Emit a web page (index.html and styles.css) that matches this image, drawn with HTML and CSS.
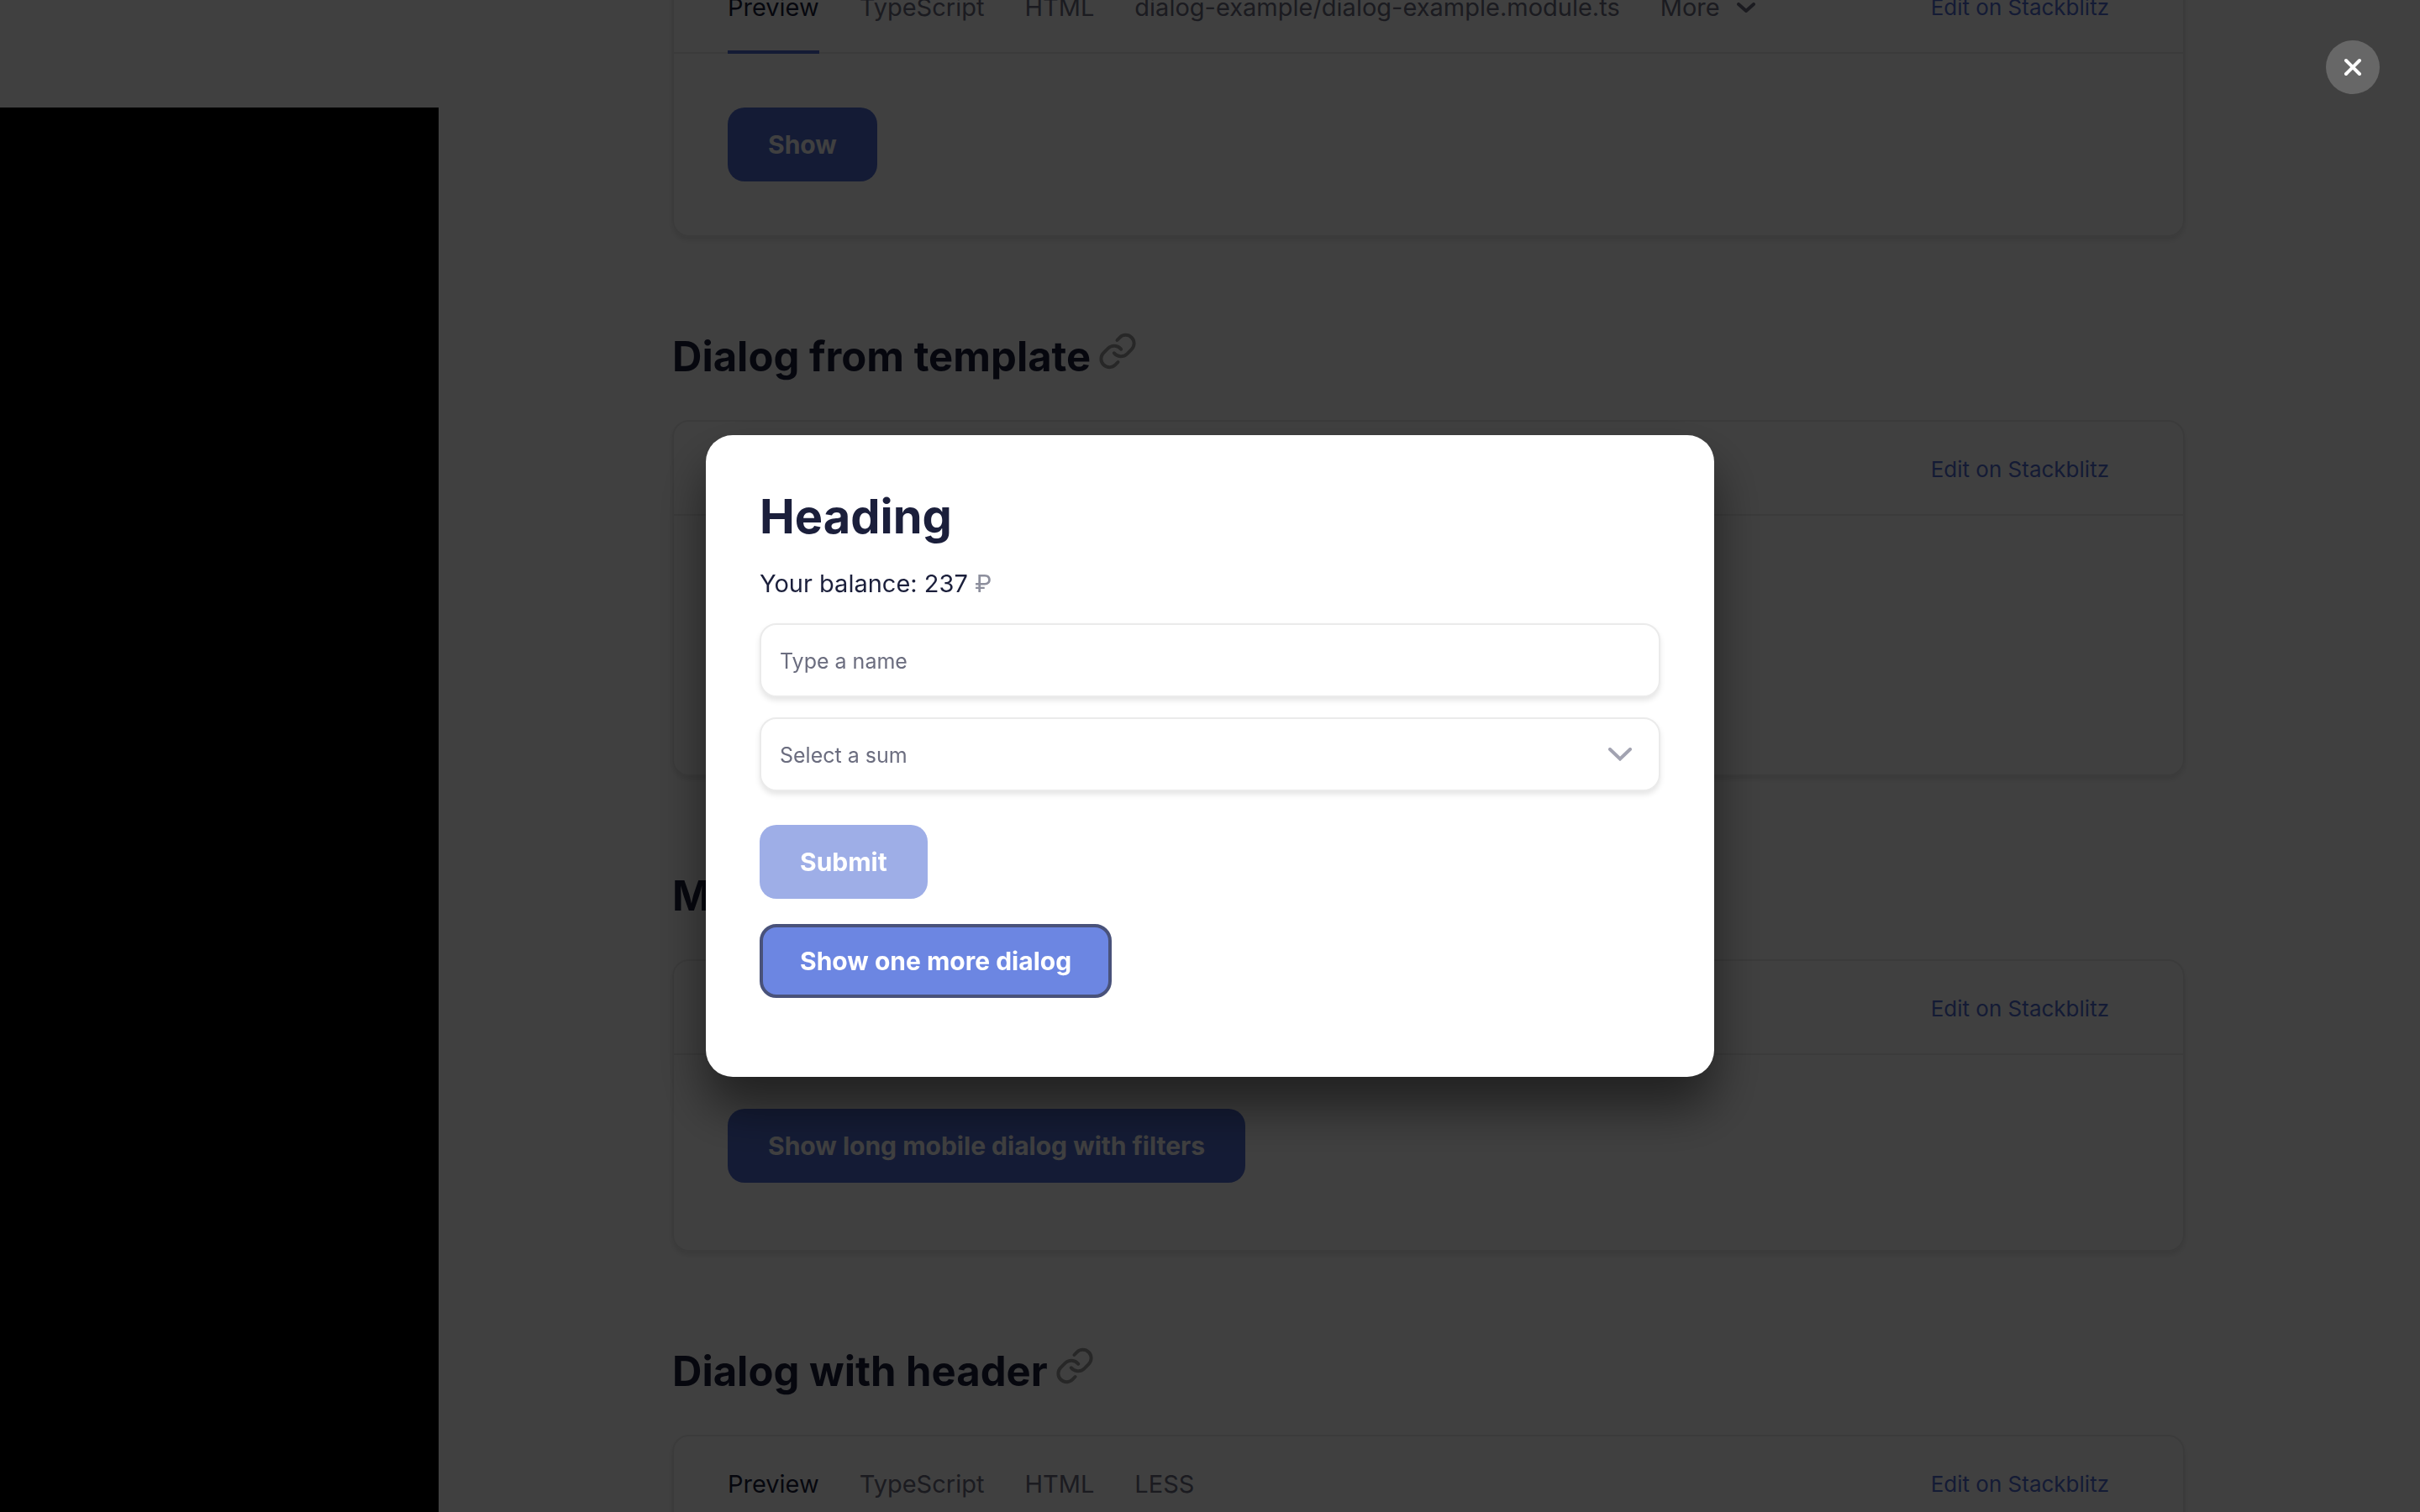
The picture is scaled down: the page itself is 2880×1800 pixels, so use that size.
FILE: index.html
```
<!DOCTYPE html>
<html lang="en">
<head>
  <meta charset="utf-8">
  <title>Dialog</title>
  <link rel="stylesheet" href="styles.css">
</head>
<body>
  <svg class="sprite" aria-hidden="true">
    <symbol id="icon-link" viewBox="0 0 44 44">
      <path d="M21.5 9 24.5 5.8A10 10 0 0 1 38.7 19.9L33.3 25.3A10.5 10.5 0 0 1 17.8 24.3M22.5 35 19.5 38.2A10 10 0 0 1 5.3 24.1L10.7 18.7A10.5 10.5 0 0 1 26.2 19.7" fill="none" stroke="currentColor" stroke-width="4" stroke-linecap="round"/>
    </symbol>
  </svg>

  <div class="page">
    <aside class="sidebar"></aside>
    <main class="content">
      <section class="card">
        <header class="card-header">
          <nav class="tabs">
            <button class="tab tab-active" type="button">Preview</button>
            <button class="tab" type="button">TypeScript</button>
            <button class="tab" type="button">HTML</button>
            <button class="tab" type="button">dialog-example/dialog-example.module.ts</button>
            <button class="tab" type="button">More
              <svg class="tab-chevron" viewBox="0 0 22 12" aria-hidden="true"><path d="M2 2l9 8 9-8" fill="none" stroke="currentColor" stroke-width="4" stroke-linecap="round" stroke-linejoin="round"/></svg>
            </button>
          </nav>
          <a class="link" href="#">Edit on Stackblitz</a>
        </header>
        <div class="card-body"><button class="button" type="button">Show</button></div>
      </section>

      <h2 class="title">Dialog from template <a class="anchor" href="#template" aria-label="Link to section"><svg><use href="#icon-link"/></svg></a></h2>
      <section class="card" id="template">
        <header class="card-header">
          <a class="link" href="#">Edit on Stackblitz</a>
        </header>
        <div class="card-body card-body-tall"></div>
      </section>

      <h2 class="title">Mobile</h2>
      <section class="card" id="mobile">
        <header class="card-header">
          <a class="link" href="#">Edit on Stackblitz</a>
        </header>
        <div class="card-body card-body-spaced"><button class="button" type="button">Show long mobile dialog with filters</button></div>
      </section>

      <h2 class="title">Dialog with header <a class="anchor" href="#header" aria-label="Link to section"><svg><use href="#icon-link"/></svg></a></h2>
      <section class="card" id="header">
        <header class="card-header">
          <nav class="tabs">
            <button class="tab tab-active" type="button">Preview</button>
            <button class="tab" type="button">TypeScript</button>
            <button class="tab" type="button">HTML</button>
            <button class="tab" type="button">LESS</button>
          </nav>
          <a class="link" href="#">Edit on Stackblitz</a>
        </header>
      </section>
    </main>
  </div>

  <div class="overlay">
    <form class="dialog" role="dialog" aria-modal="true" aria-labelledby="dialog-heading">
      <h1 class="dialog-heading" id="dialog-heading">Heading</h1>
      <p class="balance">Your balance: 237 <span class="currency">₽</span></p>
      <input class="field" type="text" placeholder="Type a name" aria-label="Type a name">
      <div class="select">
        <select class="field" aria-label="Select a sum"><option>Select a sum</option></select>
        <svg class="select-chevron" viewBox="0 0 28 16" aria-hidden="true"><path d="M2 2l12 11.5L26 2" fill="none" stroke="currentColor" stroke-width="4" stroke-linecap="round"/></svg>
      </div>
      <button class="button button-submit" type="submit" disabled>Submit</button>
      <button class="button button-focused" type="button">Show one more dialog</button>
    </form>
    <button class="close" type="button" aria-label="Close">
      <svg viewBox="0 0 22 22" aria-hidden="true"><path d="M3 3l16 16M19 3 3 19" fill="none" stroke="currentColor" stroke-width="4" stroke-linecap="round"/></svg>
    </button>
  </div>
</body>
</html>
```
FILE: styles.css
```
:root {
  --text: #1b1f3b;
  --text-muted: #6b6d7f;
  --primary: #526ed3;
  --primary-hover: #6c86e2;
  --line: #ebebeb;
  --card-shadow: 0 4px 6px rgba(0, 0, 0, 0.1);
}

*, *::before, *::after {
  box-sizing: border-box;
}

body {
  margin: 0;
  height: 100vh;
  overflow: hidden;
  background: #fff;
  color: var(--text);
  font: 400 29px/40px Inter, "Open Sans", sans-serif;
}

button, input, select {
  font: inherit;
  color: inherit;
}

.sprite {
  display: none;
}

.page {
  display: grid;
  grid-template-columns: 522px 1fr;
  height: 100vh;
  overflow: hidden;
}

.sidebar {
  margin-top: 128px;
  background: #000;
}

/* The page stays scrolled while the dialog is open */
.content {
  margin-top: -50px;
  padding: 0 280px 0 278px;
}

.card {
  border: 2px solid var(--line);
  border-radius: 20px;
  box-shadow: var(--card-shadow);
}

.card-header {
  display: flex;
  justify-content: space-between;
  align-items: center;
  height: 112px;
  padding: 2px 88px 0 64px;
  border-bottom: 2px solid var(--line);
}

.tabs {
  display: flex;
  align-self: stretch;
  gap: 48px;
}

.tab {
  display: flex;
  align-items: center;
  gap: 20px;
  margin-bottom: -2px;
  padding: 4px 0 0;
  border: 0;
  border-bottom: 4px solid transparent;
  background: none;
  color: var(--text-muted);
  white-space: nowrap;
}

.tab-active {
  border-bottom-color: var(--primary);
  color: var(--text);
}

.tab-chevron {
  width: 22px;
  height: 12px;
}

.link {
  margin-left: auto;
  padding-top: 2px;
  color: var(--primary);
  font-size: 26px;
  text-decoration: none;
}

.card-body {
  padding: 64px;
}

.card-body-tall {
  min-height: 308px;
}

.card-body-spaced {
  padding-bottom: 80px;
}

.title {
  display: flex;
  gap: 10px;
  margin: 111px 0 43px;
  font-size: 49px;
  line-height: 64px;
  font-weight: 700;
}

.anchor {
  color: #9c9c9c;
}

.anchor svg {
  display: block;
  width: 44px;
  height: 44px;
  margin-top: 3px;
}

.button {
  display: block;
  height: 88px;
  padding: 0 48px;
  border: 0;
  border-radius: 20px;
  background: var(--primary);
  color: #fff;
  font-size: 30px;
  font-weight: 700;
}

.overlay {
  position: fixed;
  inset: 0;
  display: flex;
  align-items: center;
  justify-content: center;
  background: rgba(0, 0, 0, 0.75);
}

.dialog {
  width: 1200px;
  padding: 65px 64px 94px;
  border-radius: 32px;
  background: #fff;
  box-shadow: 0 36px 60px rgba(0, 0, 0, 0.5);
}

.dialog-heading {
  margin: 0 0 28px;
  font-size: 56px;
  line-height: 64px;
  font-weight: 700;
}

.balance {
  margin: 0 0 27px;
}

.currency {
  color: #8d8f9d;
}

.field {
  display: block;
  width: 100%;
  height: 88px;
  padding: 2px 22px 0;
  border: 2px solid var(--line);
  border-radius: 20px;
  outline: 0;
  appearance: none;
  background: #fff;
  box-shadow: var(--card-shadow);
  color: var(--text-muted);
  font-size: 25px;
}

.field::placeholder {
  color: var(--text-muted);
  opacity: 1;
}

.select {
  position: relative;
  margin: 24px 0 40px;
}

.select-chevron {
  position: absolute;
  top: 36px;
  right: 34px;
  width: 28px;
  height: 16px;
  color: #a2a3b1;
  pointer-events: none;
}

.button-submit {
  margin-bottom: 30px;
  background: #9eaee7;
}

.button-focused {
  border: 4px solid #49527a;
  padding: 0 44px;
  background: var(--primary-hover);
}

.close {
  position: absolute;
  top: 48px;
  right: 48px;
  display: grid;
  place-items: center;
  width: 64px;
  height: 64px;
  padding: 0;
  border: 0;
  border-radius: 50%;
  background: rgba(255, 255, 255, 0.2);
  color: #fff;
}

.close svg {
  width: 22px;
  height: 22px;
}
```
